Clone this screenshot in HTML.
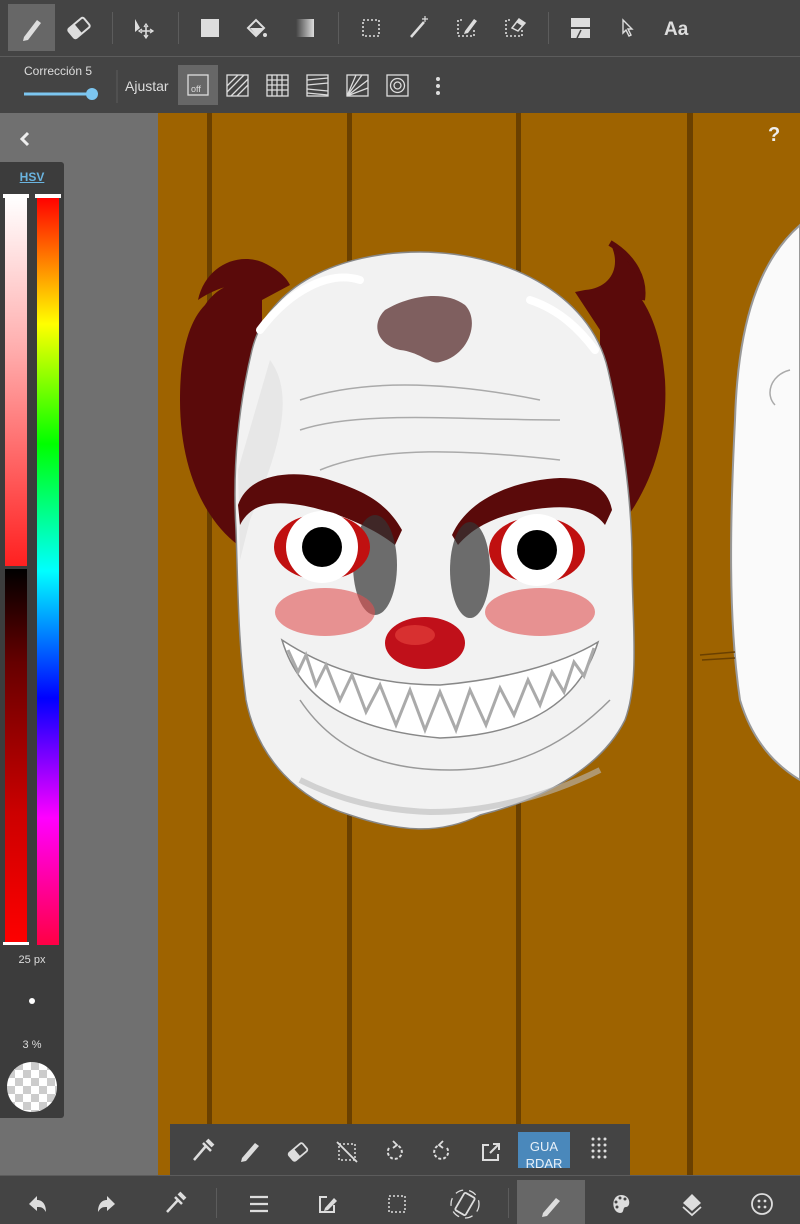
<!DOCTYPE html>
<html><head><meta charset="utf-8"><style>
*{margin:0;padding:0;box-sizing:border-box}
body{width:800px;height:1224px;overflow:hidden;background:#444;font-family:"Liberation Sans",sans-serif;position:relative}
.a{position:absolute}
svg{position:absolute}
</style></head><body>
<div class="a" style="left:0;top:0;width:800px;height:56px;background:#444"></div>
<div class="a" style="left:0;top:56px;width:800px;height:1px;background:#5c5c5c"></div>
<div class="a" style="left:0;top:57px;width:800px;height:56px;background:#444"></div>
<div class="a" style="left:8px;top:4px;width:47px;height:47px;background:#676767"></div>
<div class="a" style="left:112px;top:12px;width:1px;height:32px;background:#5c5c5c"></div>
<div class="a" style="left:178px;top:12px;width:1px;height:32px;background:#5c5c5c"></div>
<div class="a" style="left:338px;top:12px;width:1px;height:32px;background:#5c5c5c"></div>
<div class="a" style="left:548px;top:12px;width:1px;height:32px;background:#5c5c5c"></div>
<svg width="800" height="113" style="left:0;top:0" fill="none" stroke="#ddd" stroke-width="2">
 <path d="M24 37 L37 20 L41 23 L28 40 L23 41 Z" fill="#ddd" stroke="none"/>
 <g transform="translate(79,28) rotate(-40)"><rect x="-10" y="-6" width="20" height="12" rx="2" fill="none" stroke="#ddd" stroke-width="2"/><rect x="-10" y="-6" width="9" height="12" fill="#ddd" stroke="none"/></g>
 <path d="M135 19 L135 32 L140 28 Z" fill="#ddd" stroke="none"/>
 <path d="M146 26 V37 M141 31 H152" stroke-width="1.6"/><path d="M144 27 L146 24 L148 27 M144 35 L146 38 L148 35 M142 29 L139 31 L142 33 M150 29 L153 31 L150 33" stroke-width="1.3"/>
 <rect x="201" y="19" width="18" height="18" fill="#ddd" stroke="none"/>
 <path d="M248 28 L256 20 L264 28 L256 36 Z" stroke-width="2"/><path d="M250 28 H263 L256 35 Z" fill="#ddd" stroke="none"/><circle cx="265" cy="35" r="2" fill="#ddd" stroke="none"/>
 <defs><linearGradient id="g1"><stop offset="0" stop-color="#444"/><stop offset="1" stop-color="#ddd"/></linearGradient></defs>
 <rect x="296" y="19" width="18" height="18" fill="url(#g1)" stroke="none"/>
 <rect x="363" y="20" width="16" height="16" stroke-dasharray="2 2" stroke-width="1.6"/>
 <path d="M411 37 L424 22" stroke-width="2.5"/><path d="M425 16 V22 M422 19 H428" stroke-width="1.2"/>
 <path d="M462 20 H458 V36 H474 V30" stroke-dasharray="2 2" stroke-width="1.6"/><path d="M465 31 L474 19 L477 21 L468 33 L464 34 Z" fill="#ddd" stroke="none"/>
 <path d="M510 20 H506 V36 H522 V30" stroke-dasharray="2 2" stroke-width="1.6"/><path d="M512 28 L519 19 L525 23 L518 31 Z" stroke-width="1.5"/><path d="M516 22 L519 19 L525 23 L522 26 Z" fill="#ddd" stroke="none"/>
 <rect x="571" y="18" width="19" height="9" fill="#ddd" stroke="none"/><path d="M571 29 H590 V38 H571 Z" fill="#ddd" stroke="none"/><path d="M577 38 L581 30" stroke="#444" stroke-width="1.5"/>
 <path d="M623 20 L623 33 L626 30 L629 36 L631 35 L628 29 L632 29 Z" stroke-width="1.4"/>
 <text x="664" y="35" font-family="Liberation Sans" font-weight="bold" font-size="19" fill="#ddd" stroke="none">Aa</text>
 <text x="24" y="75" font-size="12" fill="#ddd" stroke="none">Corrección 5</text>
 <path d="M24 94 H92" stroke="#7cc6f0" stroke-width="3"/><circle cx="92" cy="94" r="6" fill="#7cc6f0" stroke="none"/>
 <path d="M117 70 V103" stroke="#5c5c5c" stroke-width="1"/>
 <text x="125" y="91" font-size="14" fill="#ddd" stroke="none">Ajustar</text>
 <rect x="178" y="65" width="40" height="40" fill="#676767" stroke="none"/>
 <rect x="188" y="75" width="20" height="20" stroke-width="1.3"/><text x="191" y="92" font-size="9" fill="#ddd" stroke="none">off</text>
 <g stroke-width="1.3">
 <rect x="227" y="75" width="21" height="21"/><path d="M227 86 L238 75 M227 92 L244 75 M231 96 L248 79 M237 96 L248 85"/>
 <rect x="267" y="75" width="21" height="21"/><path d="M267 80 H288 M267 85 H288 M267 90 H288 M272 75 V96 M277 75 V96 M282 75 V96"/>
 <rect x="307" y="75" width="21" height="21"/><path d="M307 80 L328 78 M307 85 L328 83 M307 89 L328 91 M307 93 L328 95"/>
 <rect x="347" y="75" width="21" height="21"/><path d="M347 96 L356 75 M347 96 L362 75 M347 96 L368 80 M347 96 L368 88"/>
 <rect x="387" y="75" width="21" height="21"/><circle cx="397.5" cy="85.5" r="7"/><circle cx="397.5" cy="85.5" r="3.5"/>
 </g>
 <circle cx="438" cy="79" r="2" fill="#ddd" stroke="none"/><circle cx="438" cy="86" r="2" fill="#ddd" stroke="none"/><circle cx="438" cy="93" r="2" fill="#ddd" stroke="none"/>
</svg>

<div class="a" style="left:0;top:113px;width:158px;height:1062px;background:#707070"></div>
<svg width="20" height="20" style="left:15px;top:129px"><path d="M13 4 L7 10 L13 16" stroke="#eee" stroke-width="3" fill="none"/></svg>
<div class="a" style="left:0;top:162px;width:64px;height:956px;background:#3c3c3c;border-radius:0 3px 3px 0"></div>
<div class="a" style="left:0;top:170px;width:64px;text-align:center;font-size:12px;font-weight:bold;color:#6ab4e0;text-decoration:underline">HSV</div>
<div class="a" style="left:5px;top:197px;width:22px;height:369px;background:linear-gradient(#fff,#ffb0b0 40%,#ff2020 100%)"></div>
<div class="a" style="left:5px;top:569px;width:22px;height:376px;background:linear-gradient(#000,#600 25%,#c00 65%,#f00)"></div>
<div class="a" style="left:37px;top:197px;width:22px;height:748px;background:linear-gradient(#f00,#ff0 17%,#0f0 33%,#0ff 50%,#00f 67%,#f0f 83%,#f04)"></div>
<div class="a" style="left:3px;top:194px;width:26px;height:4px;background:#fff"></div>
<div class="a" style="left:35px;top:194px;width:26px;height:4px;background:#fff"></div>
<div class="a" style="left:3px;top:942px;width:26px;height:3px;background:#fff"></div>
<div class="a" style="left:0;top:954px;width:64px;text-align:center;font-size:11px;color:#ddd">25 px</div>
<div class="a" style="left:29px;top:998px;width:6px;height:6px;border-radius:50%;background:#fff"></div>
<div class="a" style="left:0;top:1039px;width:64px;text-align:center;font-size:11px;color:#ddd">3 %</div>
<div class="a" style="left:7px;top:1062px;width:50px;height:50px;border-radius:50%;background-color:#fff;background-image:linear-gradient(45deg,#ccc 25%,transparent 25%,transparent 75%,#ccc 75%),linear-gradient(45deg,#ccc 25%,transparent 25%,transparent 75%,#ccc 75%);background-size:16px 16px;background-position:0 0,8px 8px"></div>

<div class="a" style="left:158px;top:113px;width:642px;height:1062px;background:#9e6300"></div>
<div class="a" style="left:207px;top:113px;width:5px;height:1062px;background:#6a4000"></div>
<div class="a" style="left:347px;top:113px;width:5px;height:1062px;background:#6a4000"></div>
<div class="a" style="left:516px;top:113px;width:5px;height:1062px;background:#6a4000"></div>
<div class="a" style="left:687px;top:113px;width:6px;height:1062px;background:#6a4000"></div>
<div class="a" style="left:768px;top:124px;font-size:20px;font-weight:bold;color:#eee">?</div>

<svg width="642" height="1062" style="left:158px;top:113px">
<g transform="translate(-158,-113)">
 <path d="M800 225 C760 260 738 320 735 420 C730 520 728 620 740 700 C752 740 775 765 800 780 Z" fill="#fafafa" stroke="#999" stroke-width="2"/>
 <path d="M790 370 C770 375 765 395 775 405" stroke="#aaa" fill="none" stroke-width="1.5"/>
 <path d="M700 655 L735 652 M702 660 L735 658" stroke="#6a4000" stroke-width="1.5"/>
 <!-- hair -->
 <path d="M198 300 C205 268 235 252 262 262 C275 268 285 275 290 285 L262 300 L262 480 L238 545 C205 520 180 470 180 400 C180 350 190 320 205 305 C215 290 230 282 240 285 C225 285 210 292 198 300 Z" fill="#5a0a0a"/>
 <path d="M642 300 C642 272 628 250 610 243 C622 265 612 288 585 290 L575 292 L600 330 L600 470 L625 520 C655 480 668 430 665 380 C662 340 652 315 642 300 Z" fill="#5a0a0a"/>
 <path d="M610 243 C635 258 645 280 642 300" stroke="#5a0a0a" stroke-width="6" fill="none"/>
 <!-- face -->
 <path d="M420 252 C340 252 268 285 252 350 C240 400 232 460 236 530 C238 590 238 640 246 700 C258 760 300 800 350 815 C400 832 440 835 480 815 C540 800 600 770 625 720 C640 680 632 620 632 560 C632 500 622 430 608 370 C590 290 500 252 420 252 Z" fill="#f2f2f2" stroke="#888" stroke-width="1.5"/>
 <path d="M270 360 C300 400 270 470 250 520 L240 560 L238 470 Z" fill="#e0e0e0" opacity=".6"/>
 <path d="M300 400 C360 380 440 380 540 400 M300 430 C360 410 460 420 560 420 M320 470 C380 445 470 450 560 460" stroke="#aaa" fill="none" stroke-width="1.5"/>
 <path d="M260 330 C290 290 330 270 360 280 M530 300 C560 310 580 330 595 350" stroke="#fff" stroke-width="8" fill="none" stroke-linecap="round"/>
 <path d="M440 362 C470 355 480 320 465 305 C445 290 410 295 385 310 C370 325 378 345 400 350 C420 352 430 365 440 362 Z" fill="#6b4545" opacity=".85"/>
 <path d="M238 505 C250 470 300 470 330 480 C360 490 385 500 402 530 L395 545 C370 525 330 510 300 505 C270 500 250 505 240 525 Z" fill="#5a0a0a"/>
 <path d="M452 535 C470 495 520 480 560 478 C590 478 608 488 612 510 L605 525 C590 505 560 505 530 510 C500 515 475 525 458 545 Z" fill="#5a0a0a"/>
 <ellipse cx="375" cy="565" rx="22" ry="50" fill="#333" opacity=".7"/>
 <ellipse cx="470" cy="570" rx="20" ry="48" fill="#333" opacity=".7"/>
 <ellipse cx="322" cy="547" rx="48" ry="33" fill="#c01010"/>
 <ellipse cx="537" cy="550" rx="48" ry="33" fill="#c01010"/>
 <circle cx="322" cy="547" r="36" fill="#fff"/><circle cx="322" cy="547" r="20" fill="#000"/>
 <circle cx="537" cy="550" r="36" fill="#fff"/><circle cx="537" cy="550" r="20" fill="#000"/>
 <ellipse cx="325" cy="612" rx="50" ry="24" fill="#e05050" opacity=".6"/>
 <ellipse cx="540" cy="612" rx="55" ry="24" fill="#e05050" opacity=".6"/>
 <ellipse cx="425" cy="643" rx="40" ry="26" fill="#c0101a"/>
 <ellipse cx="415" cy="635" rx="20" ry="10" fill="#d83030"/>
 <path d="M282 640 C300 700 350 730 440 738 C530 735 580 700 598 642 C560 665 500 680 440 685 C370 685 320 665 282 640 Z" fill="#fff" stroke="#888" stroke-width="1.5"/>
 <path d="M288 650 L298 672 L306 655 L316 685 L326 665 L340 700 L352 675 L366 712 L380 685 L396 725 L410 690 L425 730 L440 692 L456 730 L470 690 L486 725 L500 688 L514 715 L528 680 L540 705 L552 672 L564 692 L574 662 L584 676 L594 648" fill="none" stroke="#aaa" stroke-width="3"/>
 <path d="M300 700 C340 760 400 770 450 770 C520 770 570 740 610 700" stroke="#999" fill="none" stroke-width="1.5"/>
 <path d="M300 780 C340 800 380 810 430 812 C480 812 540 800 600 770" stroke="#bbb" fill="none" stroke-width="6" opacity=".6"/>
</g>
</svg>

<div class="a" style="left:170px;top:1124px;width:460px;height:51px;background:#444"></div>
<div class="a" style="left:518px;top:1132px;width:52px;height:36px;background:#4a88bb;color:#e8f0f8;font-size:13px;text-align:center;line-height:17px;padding-top:6px;overflow:hidden">GUA<br>RDAR</div>
<svg width="460" height="51" style="left:170px;top:1124px" fill="none" stroke="#ddd" stroke-width="2">
 <g transform="translate(-170,-1124)">
 <path d="M194 1160 L206 1146 M203 1143 L211 1151" stroke-width="2.5"/><path d="M207 1140 L213 1146" stroke-width="4"/>
 <path d="M242 1158 L255 1143 L259 1146 L246 1161 L241 1162 Z" fill="#ddd" stroke="none"/>
 <g transform="translate(298,1152) rotate(-40)"><rect x="-9" y="-5" width="18" height="10" rx="2" stroke-width="1.8"/><rect x="-9" y="-5" width="8" height="10" fill="#ddd" stroke="none"/></g>
 <rect x="339" y="1144" width="16" height="16" stroke-dasharray="2 2" stroke-width="1.5"/><path d="M337 1142 L357 1162" stroke-width="1.8"/>
 <path d="M389 1148 A7 7 0 1 0 396 1145" stroke-dasharray="3 2"/><path d="M393 1141 L397 1145 L393 1148" stroke-width="1.8"/>
 <path d="M447 1148 A7 7 0 1 1 440 1145" stroke-dasharray="3 2"/><path d="M443 1141 L439 1145 L443 1148" stroke-width="1.8"/>
 <path d="M489 1145 H483 V1160 H498 V1154 M490 1153 L499 1144 M493 1144 H499 V1150"/>
 </g>
 <g fill="#ddd" stroke="none"><circle cx="423" cy="21" r="1.5"/><circle cx="429" cy="21" r="1.5"/><circle cx="435" cy="21" r="1.5"/><circle cx="423" cy="27" r="1.5"/><circle cx="429" cy="27" r="1.5"/><circle cx="435" cy="27" r="1.5"/><circle cx="423" cy="33" r="1.5"/><circle cx="429" cy="33" r="1.5"/><circle cx="435" cy="33" r="1.5"/><circle cx="423" cy="15" r="1.5"/><circle cx="429" cy="15" r="1.5"/><circle cx="435" cy="15" r="1.5"/></g>
</svg>

<div class="a" style="left:0;top:1175px;width:800px;height:49px;background:#444;border-top:1px solid #5c5c5c"></div>
<div class="a" style="left:517px;top:1180px;width:68px;height:44px;background:#676767"></div>
<div class="a" style="left:216px;top:1188px;width:1px;height:30px;background:#5c5c5c"></div>
<div class="a" style="left:508px;top:1188px;width:1px;height:30px;background:#5c5c5c"></div>
<svg width="800" height="49" style="left:0;top:1175px" fill="none" stroke="#ddd" stroke-width="2">
 <g transform="translate(0,-1175)">
 <path d="M29 1204 L37 1196 V1200 C43 1200 46 1205 46 1212 C43 1207 41 1207 37 1207 V1211 Z" fill="#ddd" stroke="none"/>
 <path d="M115 1204 L107 1196 V1200 C101 1200 98 1205 98 1212 C101 1207 103 1207 107 1207 V1211 Z" fill="#ddd" stroke="none"/>
 <path d="M167 1212 L178 1200 M175 1197 L182 1204" stroke-width="2.5"/><path d="M179 1193 L185 1199" stroke-width="4"/>
 <path d="M250 1197 H268 M250 1204 H268 M250 1211 H268" stroke-width="2.2"/>
 <path d="M327 1197 H320 V1212 H334 V1205"/><path d="M325 1208 L334 1198 L337 1201 L328 1210 L324 1211 Z" fill="#ddd" stroke="none"/>
 <rect x="389" y="1196" width="16" height="16" stroke-dasharray="2 2" stroke-width="1.5"/>
 <g transform="translate(465,1204) rotate(30)"><rect x="-6" y="-10" width="12" height="20" rx="1.5" stroke-width="1.8"/></g><circle cx="465" cy="1204" r="14" stroke-dasharray="8 6" stroke-width="1.3"/>
 <path d="M543 1213 L556 1198 L560 1201 L547 1216 L542 1217 Z" fill="#ddd" stroke="none"/>
 <path d="M621 1195 C611 1195 611 1212 620 1213 C625 1213 622 1207 626 1207 C631 1207 631 1195 621 1195 Z" fill="#ddd" stroke="none"/>
 <g fill="#444" stroke="none"><circle cx="616" cy="1202" r="1.5"/><circle cx="620" cy="1198" r="1.5"/><circle cx="625" cy="1199" r="1.5"/><circle cx="617" cy="1207" r="1.5"/></g>
 <path d="M692 1194 L701 1203 L692 1211 L683 1203 Z" fill="#ddd" stroke="none"/><path d="M683 1207 L692 1215 L701 1207" stroke-width="1.8"/>
 <circle cx="762" cy="1204" r="10" stroke-width="1.8"/>
 <g fill="#ddd" stroke="none"><circle cx="759" cy="1201" r="1.4"/><circle cx="765" cy="1201" r="1.4"/><circle cx="759" cy="1207" r="1.4"/><circle cx="765" cy="1207" r="1.4"/></g>
 </g>
</svg>
</body></html>
